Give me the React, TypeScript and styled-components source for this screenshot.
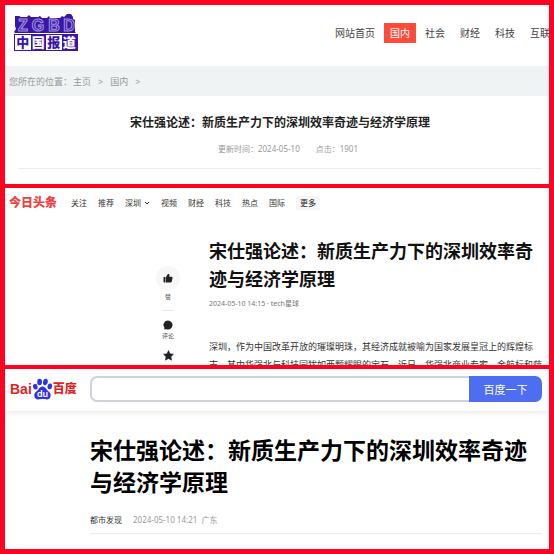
import React from "react";
import styled, { createGlobalStyle } from "styled-components";

const RED = "#ff0320";

const GlobalStyle = createGlobalStyle`
  *, *::before, *::after { box-sizing: border-box; }
  body {
    margin: 0;
    background: ${RED};
    color: #222;
    font-family: "Noto Sans", "Noto Sans CJK SC", sans-serif;
  }
  h1, h2, p, ul { margin: 0; padding: 0; }
  ul { list-style: none; }
  a { color: inherit; text-decoration: none; }
  button, input { font: inherit; }
`;

const Collage = styled.main`
  display: grid;
  gap: 4px;
  min-height: 100vh;
  padding: 5px;
  grid-template-rows: 179px 177px 1fr;
`;

const Panel = styled.section`
  min-width: 0;
  overflow: hidden;
  background: #fff;
`;

/* China Report */

const ReportHeader = styled.header`
  display: flex;
  align-items: flex-start;
  justify-content: space-between;
  height: 61px;
  padding: 9px 0 0 9px;
`;

const ReportLogo = styled.a`
  flex: none;
  display: grid;
  gap: 1px;
  width: 64px;
`;

const LogoArt = styled.svg`
  display: block;
  width: 100%;
  height: 19px;
`;

const LogoTiles = styled.span`
  display: grid;
  grid-template-columns: repeat(4, 1fr);
  border: 1px solid #3a16a8;
`;

const Tile = styled.span<{ $filled?: boolean }>`
  height: 15px;
  font-size: 13px;
  line-height: 14px;
  font-weight: 900;
  text-align: center;
  color: ${(p) => (p.$filled ? "#fff" : "#3a16a8")};
  background: ${(p) => (p.$filled ? "#3a16a8" : "#fff")};
`;

const ReportNav = styled.nav`
  display: flex;
  gap: 3px;
  margin-top: 9px;
  min-width: 0;
  width: 220px;
  overflow: hidden;
`;

const ReportLink = styled.a<{ $active?: boolean }>`
  flex: none;
  padding: 0 6px;
  font-size: 10px;
  line-height: 20px;
  color: ${(p) => (p.$active ? "#fff" : "#444")};
  background: ${(p) => (p.$active ? "#ff4b3c" : "transparent")};
`;

const Crumbs = styled.nav`
  display: flex;
  gap: 7px;
  padding: 2px 4px 0;
  height: 30px;
  font-size: 9px;
  line-height: 28px;
  color: #999;
  background: #eff3f4;
`;

const CrumbStart = styled.span`
  display: flex;
  gap: 1px;
`;

const ReportArticle = styled.article`
  margin: 0 7px 0 13px;
  padding: 18px 0 11px;
  text-align: center;
  border-bottom: 1px solid #eee;
`;

const ReportTitle = styled.h1`
  font-size: 12px;
  line-height: 18px;
  font-weight: 700;
`;

const ReportMeta = styled.p`
  display: flex;
  justify-content: center;
  gap: 16px;
  margin-top: 9px;
  padding-left: 16px;
  font-size: 8px;
  line-height: 16px;
  color: #999;
`;

/* Toutiao */

const ToutiaoHeader = styled.header`
  display: flex;
  align-items: center;
  gap: 14px;
  height: 29px;
  padding: 0 4px;
`;

const ToutiaoLogo = styled.a`
  font-size: 12px;
  line-height: 20px;
  font-weight: 900;
  color: #f04142;
`;

const ToutiaoNav = styled.nav`
  display: flex;
  align-items: center;
  gap: 11px;
  font-size: 8px;
  line-height: 14px;
  color: #333;
`;

const NavItem = styled.a`
  display: flex;
  align-items: center;
  gap: 3px;
`;

const MoreButton = styled.button`
  padding: 0 4px;
  border: 0;
  border-radius: 2px;
  background: #f6f6f6;
  color: #222;
`;

const ToutiaoBody = styled.div`
  display: grid;
  grid-template-columns: 24px 1fr;
  gap: 29px;
  padding: 20px 4px 0 151px;
`;

const Actions = styled.ul`
  display: flex;
  flex-direction: column;
  align-items: center;
  padding-top: 29px;
`;

const Action = styled.li`
  &:not(:last-child) { margin-bottom: 8px; }
`;

const ActionButton = styled.button`
  display: flex;
  flex-direction: column;
  align-items: center;
  padding: 0;
  border: 0;
  background: none;
  font-size: 6px;
  line-height: 10px;
  color: #444;
`;

const ActionIcon = styled.span<{ $round?: boolean }>`
  display: grid;
  place-items: center;
  width: ${(p) => (p.$round ? 24 : 12)}px;
  height: ${(p) => (p.$round ? 24 : 12)}px;
  margin-bottom: ${(p) => (p.$round ? 2 : 0)}px;
  border-radius: 50%;
  background: ${(p) => (p.$round ? "#f7f7f7" : "transparent")};
  color: #222;
`;

const Divider = styled.li`
  width: 12px;
  height: 1px;
  margin-bottom: 8px;
  background: #e8e8e8;
`;

const ToutiaoTitle = styled.h2`
  font-size: 18px;
  line-height: 28px;
  font-weight: 700;
  color: #111;
`;

const ToutiaoMeta = styled.p`
  margin-top: 4px;
  font-size: 7px;
  line-height: 14px;
  color: #777;
`;

const ToutiaoText = styled.p`
  margin-top: 27px;
  font-size: 9px;
  line-height: 18px;
  color: #333;
`;

/* Baidu */

const BaiduHeader = styled.header`
  display: flex;
  align-items: center;
  gap: 13px;
  height: 42px;
  padding: 0 7px 2px 5px;
  box-shadow: 0 0 8px rgba(0, 0, 0, 0.12);
`;

const BaiduLogo = styled.a`
  display: flex;
  align-items: center;
  color: #e1231f;
  font-size: 12px;
  line-height: 18px;
  font-weight: 900;
`;

const BaiduLatin = styled.span`
  font-family: "Liberation Sans", sans-serif;
  font-size: 14px;
  font-weight: 700;
`;

const SearchForm = styled.form`
  display: flex;
  flex: 1;
  min-width: 0;
  height: 26px;
`;

const SearchInput = styled.input`
  flex: 1;
  min-width: 0;
  padding: 0 8px;
  border: 2px solid #d0d2da;
  border-right: 0;
  border-radius: 7px 0 0 7px;
  background: #fff;
  font-size: 12px;
  outline: 0;
`;

const SearchButton = styled.button`
  width: 73px;
  padding: 0;
  border: 0;
  border-radius: 0 7px 7px 0;
  background: #4e6ef2;
  color: #fff;
  font-size: 11px;
`;

const BaiduArticle = styled.article`
  margin: 23px 7px 0 85px;
  padding-bottom: 6px;
  border-bottom: 1px solid #eee;
`;

const BaiduTitle = styled.h2`
  font-size: 23px;
  line-height: 32px;
  font-weight: 700;
  color: #000;
`;

const BaiduMeta = styled.p`
  display: flex;
  gap: 11px;
  margin-top: 15px;
  font-size: 8px;
  line-height: 14px;
  color: #999;
`;

const Author = styled.a`
  color: #333;
`;

const reportLinks = ["网站首页", "国内", "社会", "财经", "科技", "互联"];
const toutiaoLinks = ["关注", "推荐", "深圳", "视频", "财经", "科技", "热点", "国际"];

const ReportMark = () => (
  <LogoArt viewBox="0 0 64 19" aria-hidden="true">
    <path
      d="M1 2h4l2 1h6l2-2 2 2h7l2-1 2 2h5l2-2 1 2h10l2-2 2 1 3-3h4l2 3v2l2 1v12l1 1H1l-1-1 2-3-1-3V2z"
      fill="#3a16a8"
    />
    <g
      fill="#3a16a8"
      stroke="#a497dc"
      strokeWidth="1"
      fontFamily="Liberation Sans, sans-serif"
      fontWeight="700"
      fontSize="16"
      textAnchor="middle"
    >
      <text x="9" y="17">Z</text>
      <text x="24" y="17">G</text>
      <text x="40" y="17">B</text>
      <text x="55" y="17">D</text>
    </g>
  </LogoArt>
);

const Paw = () => (
  <svg width="21" height="22" viewBox="0 0 20 22" role="img" aria-label="du">
    <g fill="#2d35df">
      <ellipse cx="2.8" cy="8.7" rx="2.3" ry="2.9" transform="rotate(-14 2.8 8.7)" />
      <ellipse cx="7.1" cy="4" rx="2.4" ry="3.2" />
      <ellipse cx="12.9" cy="4" rx="2.4" ry="3.2" transform="rotate(8 12.9 4)" />
      <ellipse cx="17.3" cy="8.4" rx="2.3" ry="2.9" transform="rotate(10 17.3 8.4)" />
      <path d="M10 8.5c2 0 3 1.4 4.2 2.9 1.5 1.8 4 3 4 6 0 2.6-1.8 4.1-4 4.1-1.6 0-2.5-.4-4.2-.4s-2.6.4-4.2.4c-2.2 0-4-1.5-4-4.1 0-3 2.5-4.200 4-6C7 9.900 8 8.500 10 8.500z" />
    </g>
    <text x="10" y="19" textAnchor="middle" fill="#fff" fontFamily="Inter, sans-serif" fontSize="9" fontWeight="600">
      du
    </text>
  </svg>
);

const Thumb = () => (
  <svg width="10" height="10" viewBox="0 0 20 20" fill="currentColor" aria-hidden="true">
    <path d="M1 8h4v11H2.5Q1 19 1 17.5zM6 8 10 1.500Q13.500 1.500 13 5l-.5 2.500H17q2.500 0 2 2.500l-1.500 7Q17 19 15 19H6z" />
  </svg>
);

const Bubble = () => (
  <svg width="10" height="10" viewBox="0 0 20 20" fill="currentColor" aria-hidden="true">
    <path d="M10 1a9 9 0 1 1-3.5 17.3L2.5 19l.3-3.6A9 9 0 0 1 10 1z" />
  </svg>
);

const Star = () => (
  <svg width="11" height="11" viewBox="0 0 20 20" fill="currentColor" stroke="currentColor" strokeLinejoin="round" aria-hidden="true">
    <path d="m10 1 2.800 5.900 6.200.8-4.500 4.400 1.100 6.400L10 15.500l-5.600 3 1.100-6.400L1 7.700l6.200-.8z" />
  </svg>
);

const Chevron = () => (
  <svg width="6" height="6" viewBox="0 0 6 6" fill="none" stroke="currentColor" aria-hidden="true">
    <path d="m1 2 2 2 2-2" />
  </svg>
);

const App: React.FC = () => (
  <>
    <GlobalStyle />
    <Collage lang="zh-CN">
      <Panel>
        <ReportHeader>
          <ReportLogo href="#report" aria-label="中国报道">
            <ReportMark />
            <LogoTiles>
              <Tile>中</Tile>
              <Tile $filled>国</Tile>
              <Tile>报</Tile>
              <Tile $filled>道</Tile>
            </LogoTiles>
          </ReportLogo>
          <ReportNav>
            {reportLinks.map((label) => (
              <ReportLink key={label} href="#report" $active={label === "国内"}>
                {label}
              </ReportLink>
            ))}
          </ReportNav>
        </ReportHeader>
        <Crumbs>
          <CrumbStart>
            <span>您所在的位置：</span>
            <a href="#home">主页</a>
          </CrumbStart>
          <span>&gt;</span>
          <a href="#domestic">国内</a>
          <span>&gt;</span>
        </Crumbs>
        <ReportArticle>
          <ReportTitle>宋仕强论述：新质生产力下的深圳效率奇迹与经济学原理</ReportTitle>
          <ReportMeta>
            <span>更新时间：2024-05-10</span>
            <span>点击：1901</span>
          </ReportMeta>
        </ReportArticle>
      </Panel>

      <Panel>
        <ToutiaoHeader>
          <ToutiaoLogo href="#toutiao">今日头条</ToutiaoLogo>
          <ToutiaoNav>
            {toutiaoLinks.map((label) => (
              <NavItem key={label} href="#toutiao">
                {label}
                {label === "深圳" && <Chevron />}
              </NavItem>
            ))}
            <MoreButton type="button">更多</MoreButton>
          </ToutiaoNav>
        </ToutiaoHeader>
        <ToutiaoBody>
          <Actions>
            <Action>
              <ActionButton type="button">
                <ActionIcon $round><Thumb /></ActionIcon>
                赞
              </ActionButton>
            </Action>
            <Divider />
            <Action>
              <ActionButton type="button">
                <ActionIcon><Bubble /></ActionIcon>
                评论
              </ActionButton>
            </Action>
            <Action>
              <ActionButton type="button" aria-label="收藏">
                <ActionIcon><Star /></ActionIcon>
              </ActionButton>
            </Action>
          </Actions>
          <article>
            <ToutiaoTitle>宋仕强论述：新质生产力下的深圳效率奇迹与经济学原理</ToutiaoTitle>
            <ToutiaoMeta>2024-05-10 14:15 · tech星球</ToutiaoMeta>
            <ToutiaoText>
              深圳，作为中国改革开放的璀璨明珠，其经济成就被喻为国家发展皇冠上的辉煌标
              <br />
              志，其中华强北与科技园犹如两颗耀眼的宝石。近日，华强北商业专家、金航标和萨
            </ToutiaoText>
          </article>
        </ToutiaoBody>
      </Panel>

      <Panel>
        <BaiduHeader>
          <BaiduLogo href="#baidu" aria-label="百度">
            <BaiduLatin>Bai</BaiduLatin>
            <Paw />
            百度
          </BaiduLogo>
          <SearchForm onSubmit={(e) => e.preventDefault()}>
            <SearchInput type="text" aria-label="搜索" />
            <SearchButton type="submit">百度一下</SearchButton>
          </SearchForm>
        </BaiduHeader>
        <BaiduArticle>
          <BaiduTitle>宋仕强论述：新质生产力下的深圳效率奇迹与经济学原理</BaiduTitle>
          <BaiduMeta>
            <Author href="#author">都市发现</Author>
            <span>2024-05-10 14:21&nbsp; 广东</span>
          </BaiduMeta>
        </BaiduArticle>
      </Panel>
    </Collage>
  </>
);

export default App;
